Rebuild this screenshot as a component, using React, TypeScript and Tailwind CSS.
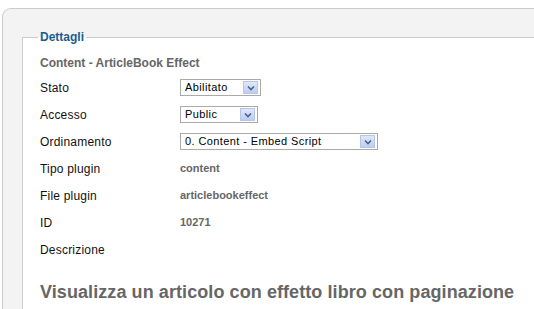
import React from "react";

const font = "font-['Liberation_Sans',Arial,sans-serif]";

function SelectBox({ value, width }: { value: string; width: string }) {
  return (
    <div
      className={`${width} h-[17px] flex items-center justify-between border border-[#aaaaaa] bg-white pl-[4px] pr-[2px]`}
    >
      <span className="text-[11px] leading-none tracking-[0.4px] text-black">{value}</span>
      <span className="w-[15px] h-[13px] flex items-center justify-center border border-[#b7c6e6] bg-gradient-to-b from-[#dfe8fb] to-[#bccdf3]">
        <svg width="8" height="6" viewBox="0 0 8 6">
          <path d="M1 1.5 L4 4.5 L7 1.5" fill="none" stroke="#4d6185" strokeWidth="1.6" />
        </svg>
      </span>
    </div>
  );
}

const rows: { label: string; value?: React.ReactNode }[] = [
  { label: "Stato", value: <SelectBox value="Abilitato" width="w-[81px]" /> },
  { label: "Accesso", value: <SelectBox value="Public" width="w-[78px]" /> },
  { label: "Ordinamento", value: <SelectBox value="0. Content - Embed Script" width="w-[198px]" /> },
  { label: "Tipo plugin", value: "content" },
  { label: "File plugin", value: "articlebookeffect" },
  { label: "ID", value: "10271" },
  { label: "Descrizione" },
];

export default function App() {
  return (
    <div className={`w-[534px] h-[309px] overflow-hidden bg-white pt-[8px] pl-[2px] ${font}`}>
      <div className="w-[600px] h-[320px] border border-r-0 border-b-0 border-[#cccccc] rounded-tl-[9px] bg-[#f3f3f3] pl-[19px] pt-[21px]">
        <fieldset className="h-full border border-r-0 border-b-0 border-[#cccccc] bg-white pl-[17px]">
          <legend className="px-[2px] -ml-[2px] text-[12px] font-bold leading-[15px] text-[#1b5c8f]">
            Dettagli
          </legend>
          <div className="pt-[11px] text-[12px] font-bold leading-[15px] text-[#666666]">
            Content - ArticleBook Effect
          </div>
          <div className="mt-[3px]">
            {rows.map((row) => (
              <div key={row.label} className="h-[27px] flex items-center">
                <div className="w-[140px] text-[12px] tracking-[0.2px] text-[#111111]">{row.label}</div>
                {typeof row.value === "string" ? (
                  <div className="text-[11px] font-bold text-[#666666]">{row.value}</div>
                ) : (
                  row.value
                )}
              </div>
            ))}
          </div>
          <h2 className="mt-[19px] text-[18px] font-bold leading-[21px] tracking-[0.08px] text-[#666666]">
            Visualizza un articolo con effetto libro con paginazione
          </h2>
        </fieldset>
      </div>
    </div>
  );
}
